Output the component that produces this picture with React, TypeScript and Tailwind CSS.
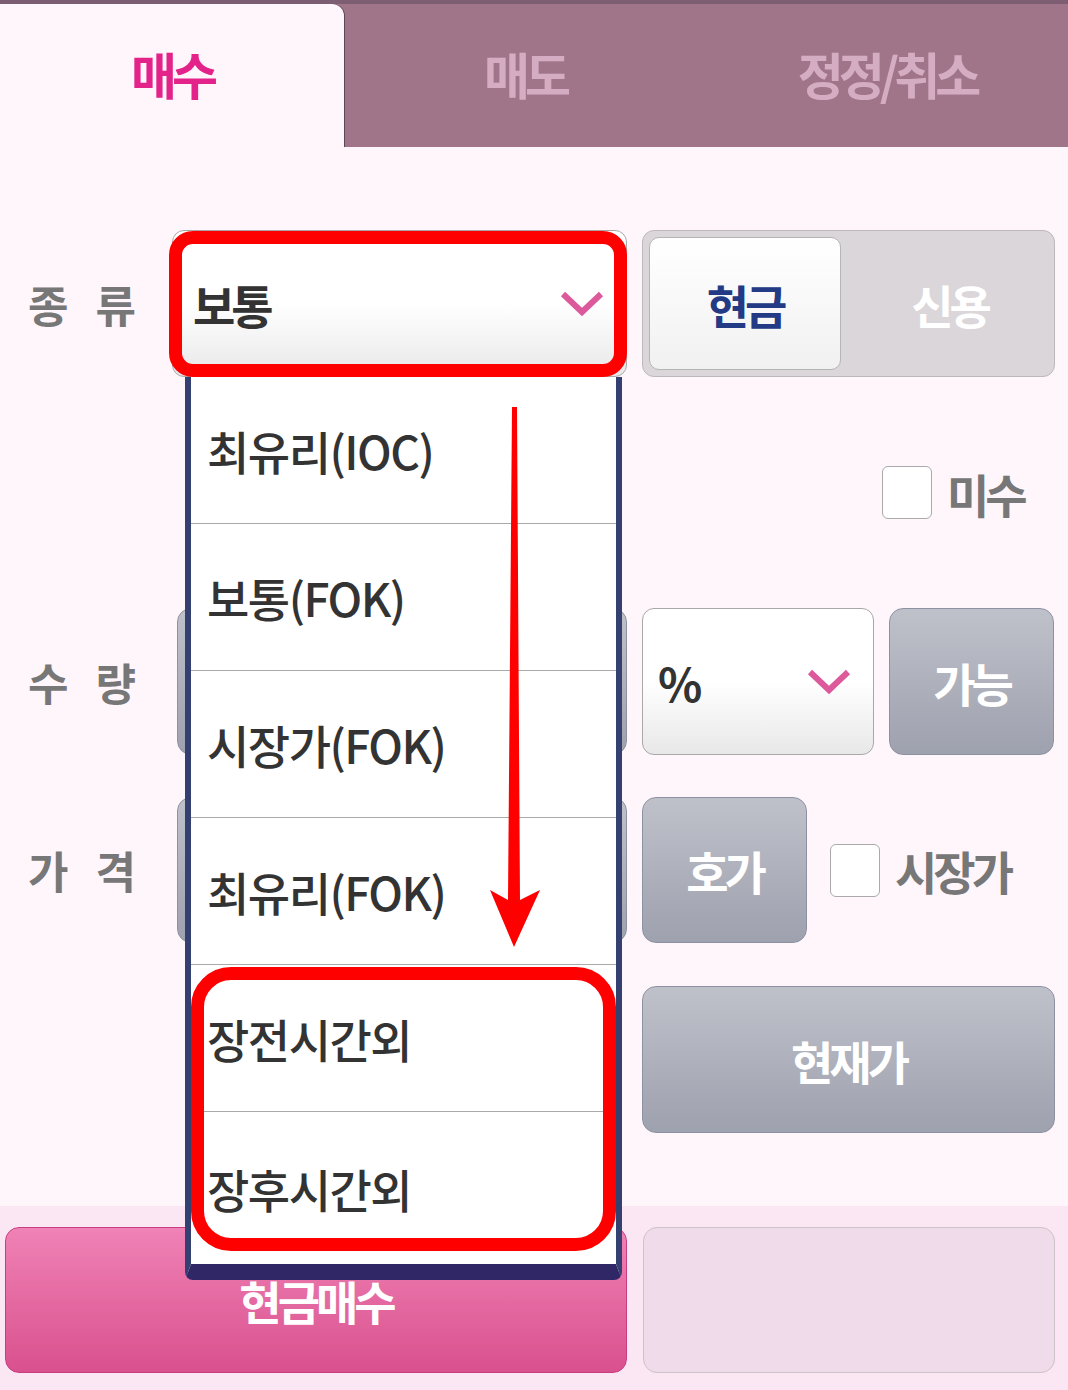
import React from "react";

function Chevron() {
  return (
    <svg width="44" height="28" viewBox="0 0 44 28">
      <polyline points="3,4 22,22 41,4" fill="none" stroke="#dc5a9c" strokeWidth="6" />
    </svg>
  );
}

function Label({ a, b, w }: { a: string; b: string; w: string }) {
  return (
    <div className={`${w} flex items-center gap-[31px] pl-[28px] text-[44px] font-bold text-[#777777]`}>
      <span>{a}</span>
      <span>{b}</span>
    </div>
  );
}

const gray =
  "rounded-[14px] border border-[#8e91a1] bg-linear-to-b from-[#bfc1ca] to-[#9ea1ae] flex items-center justify-center text-white";

export default function App() {
  const items = ["최유리(IOC)", "보통(FOK)", "시장가(FOK)", "최유리(FOK)", "장전시간외", "장후시간외"];
  return (
    <div className="relative w-[1068px] h-[1390px] overflow-hidden bg-[#fff6fb] font-['Noto_Sans_CJK_KR','Noto_Sans',sans-serif] leading-none">
      {/* tabs */}
      <div className="flex h-[147px] bg-[#a07589] border-t-[4px] border-[#7c5d71] text-[50px] font-bold tracking-[-5px]">
        <div className="w-[344px] flex items-center justify-center pb-[6px] bg-[#fff6fc] rounded-tr-[12px] shadow-[1px_0_0_#5f4558] text-[#e3228a]">
          매수
        </div>
        <div className="flex-1 flex items-center justify-center pb-[6px] text-[#d5adc3]">매도</div>
        <div className="flex-1 flex items-center justify-center pb-[6px] text-[#d5adc3]">정정/취소</div>
      </div>

      {/* form */}
      <div className="pt-[83px] text-[46px] font-bold tracking-[-4px]">
        {/* row 1 */}
        <div className="flex h-[147px] items-stretch">
          <Label a="종" b="류" w="w-[172px]" />
          <div className="w-[455px] rounded-[12px] border border-[#a8a8a8] bg-linear-to-b from-white via-white to-[#e8e8e8] flex items-center justify-between pl-[20px] pr-[22px] text-[#333333]">
            <span>보통</span>
            <Chevron />
          </div>
          <div className="ml-[15px] w-[413px] rounded-[12px] border border-[#bdb8bd] bg-[#dbd6da] p-[6px] flex">
            <div className="w-[192px] rounded-[10px] border border-[#b5b5b5] bg-linear-to-b from-white to-[#f1f1f1] flex items-center justify-center text-[#233a85]">
              현금
            </div>
            <div className="flex-1 flex items-center justify-center pl-[10px] text-white">신용</div>
          </div>
        </div>

        {/* row 2 */}
        <div className="mt-[89px] h-[53px] flex items-center pl-[882px]">
          <div className="w-[50px] h-[53px] rounded-[6px] border border-[#aaaaaa] bg-white" />
          <span className="ml-[15px] text-[#777777]">미수</span>
        </div>

        {/* row 3 */}
        <div className="mt-[89px] h-[147px] flex items-stretch">
          <Label a="수" b="량" w="w-[177px]" />
          <div className={`w-[450px] ${gray}`} />
          <div className="ml-[15px] w-[232px] rounded-[12px] border border-[#a8a8a8] bg-linear-to-b from-white via-white to-[#e8e8e8] flex items-center justify-between pl-[15px] pr-[22px] text-[#333333]">
            <span className="tracking-normal">%</span>
            <Chevron />
          </div>
          <div className={`ml-[15px] w-[165px] ${gray}`}>가능</div>
        </div>

        {/* row 4 */}
        <div className="mt-[42px] h-[146px] flex items-stretch">
          <Label a="가" b="격" w="w-[177px]" />
          <div className={`w-[450px] ${gray}`} />
          <div className={`ml-[15px] w-[165px] ${gray}`}>호가</div>
          <div className="ml-[23px] self-center w-[50px] h-[53px] rounded-[6px] border border-[#aaaaaa] bg-white" />
          <span className="ml-[15px] self-center text-[#777777]">시장가</span>
        </div>

        {/* row 5 */}
        <div className="mt-[43px] h-[147px] flex pl-[642px]">
          <div className={`w-[413px] ${gray}`}>현재가</div>
        </div>

        {/* bottom bar */}
        <div className="mt-[73px] h-[185px] bg-[#fbe6f4] pt-[21px] pl-[5px] flex">
          <div className="w-[622px] h-[146px] rounded-[14px] border border-[#c93d80] bg-linear-to-b from-[#ef82b6] to-[#d9508e] flex items-center justify-center text-white">
            현금매수
          </div>
          <div className="ml-[16px] w-[412px] h-[146px] rounded-[14px] border border-[#cbc3c8] bg-[#efdbe9]" />
        </div>
      </div>

      {/* dropdown list */}
      <div className="absolute left-[185px] top-[377px] w-[437px] h-[903px] flex flex-col border-x-[6px] border-x-[#34406f] border-b-[16px] border-b-[#302866] rounded-b-[8px] bg-white">
        {items.map((t, i) => (
          <div
            key={t}
            className={`${i < 5 ? "h-[147px] border-b border-[#aaaaaa]" : "flex-1"} flex items-center pl-[16px] text-[46px] font-medium tracking-[-1.5px] text-[#333333]`}
          >
            {t}
          </div>
        ))}
      </div>

      {/* red highlights */}
      <div className="absolute left-[169px] top-[231px] w-[458px] h-[146px] border-[13px] border-[#ff0000] rounded-[24px]" />
      <div className="absolute left-[191px] top-[967px] w-[425px] h-[284px] border-[13px] border-[#ff0000] rounded-[40px]" />

      {/* red arrow */}
      <svg className="absolute left-0 top-0 pointer-events-none" width="1068" height="1390" viewBox="0 0 1068 1390">
        <polygon
          points="512,407 517,407 520,900 540,890 514,947 490,890 508,900"
          fill="#ff0000"
        />
      </svg>
    </div>
  );
}
